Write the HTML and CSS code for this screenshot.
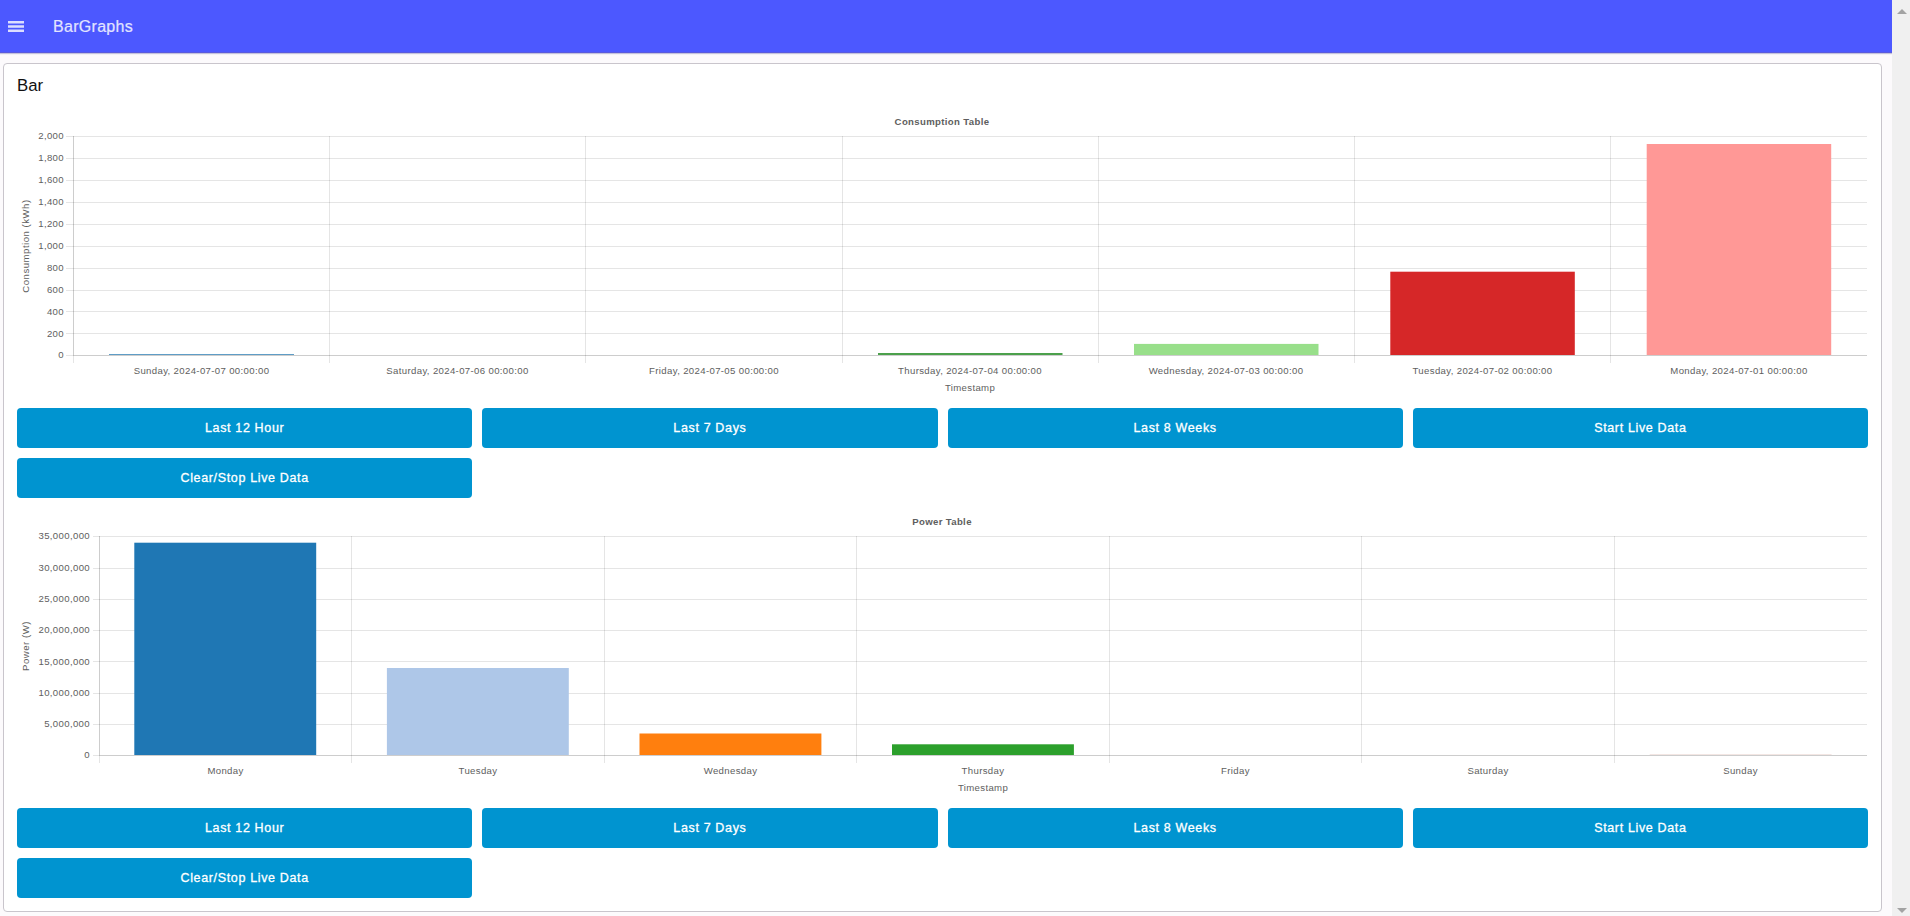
FILE: index.html
```html
<!DOCTYPE html>
<html lang="en">
<head>
<meta charset="utf-8">
<title>BarGraphs</title>
<link rel="stylesheet" href="styles.css">
</head>
<body>
<div class="page">
  <header class="toolbar">
    <svg class="menu-icon" width="16" height="11" viewBox="0 0 16 11"><path d="M0 0h16v2.4H0zM0 4.3h16v2.4H0zM0 8.6h16V11H0z"/></svg>
    <h1 class="toolbar-title">BarGraphs</h1>
  </header>
  <main class="card">
    <h2 class="card-title">Bar</h2>

    <svg class="chart" viewBox="17 108 1852 290" width="1852" height="290">
      <text class="title" x="942" y="125">Consumption Table</text>
      <path class="grid" d="M66 136.5H1867M66 158.5H1867M66 180.5H1867M66 202.5H1867M66 224.5H1867M66 246.5H1867M66 268.5H1867M66 290.5H1867M66 311.5H1867M66 333.5H1867M66 355.5H1867M73.5 136V363M329.5 136V363M585.5 136V363M842.5 136V363M1098.5 136V363M1354.5 136V363M1610.5 136V363"/>
      <path class="grid" d="M73.5 136V355M73 355.5H1867"/>
      <rect x="109" y="354" width="185" height="1" fill="#5f9dc6"/>
      <rect x="878" y="353" width="184.5" height="2" fill="#4ba04b"/>
      <rect x="1134" y="343.9" width="184.5" height="11.1" fill="#98df8a"/>
      <rect x="1390.3" y="271.7" width="184.5" height="83.3" fill="#d62728"/>
      <rect x="1646.7" y="144" width="184.5" height="211" fill="#ff9896"/>
      <g class="y-labels">
        <text x="64" y="139">2,000</text><text x="64" y="161">1,800</text><text x="64" y="183">1,600</text><text x="64" y="205">1,400</text><text x="64" y="227">1,200</text><text x="64" y="249">1,000</text><text x="64" y="271">800</text><text x="64" y="293">600</text><text x="64" y="315">400</text><text x="64" y="337">200</text><text x="64" y="358">0</text>
      </g>
      <g class="x-labels">
        <text x="201.5" y="374">Sunday, 2024-07-07 00:00:00</text><text x="457.5" y="374">Saturday, 2024-07-06 00:00:00</text><text x="714" y="374">Friday, 2024-07-05 00:00:00</text><text x="970" y="374">Thursday, 2024-07-04 00:00:00</text><text x="1226" y="374">Wednesday, 2024-07-03 00:00:00</text><text x="1482.5" y="374">Tuesday, 2024-07-02 00:00:00</text><text x="1739" y="374">Monday, 2024-07-01 00:00:00</text>
        <text x="970" y="391">Timestamp</text>
      </g>
      <text class="axis-name" transform="translate(29 246) rotate(-90)">Consumption (kWh)</text>
    </svg>
    <div class="buttons">
      <button>Last 12 Hour</button><button>Last 7 Days</button><button>Last 8 Weeks</button><button>Start Live Data</button><button>Clear/Stop Live Data</button>
    </div>

    <svg class="chart" viewBox="17 508 1852 290" width="1852" height="290">
      <text class="title" x="942" y="525">Power Table</text>
      <path class="grid" d="M93 536.5H1867M93 568.5H1867M93 599.5H1867M93 630.5H1867M93 661.5H1867M93 693.5H1867M93 724.5H1867M93 755.5H1867M99.5 536V763M351.5 536V763M604.5 536V763M856.5 536V763M1109.5 536V763M1361.5 536V763M1614.5 536V763"/>
      <path class="grid" d="M99.5 536V755M99 755.5H1867"/>
      <rect x="134.3" y="542.7" width="181.9" height="212.3" fill="#1f77b4"/>
      <rect x="386.9" y="668" width="181.9" height="87" fill="#aec7e8"/>
      <rect x="639.5" y="733.5" width="181.9" height="21.5" fill="#ff7f0e"/>
      <rect x="892" y="744.3" width="181.9" height="10.7" fill="#2ca02c"/>
      <rect x="1649.7" y="754" width="181.9" height="1" fill="#f3e6e3"/>
      <g class="y-labels">
        <text x="90" y="539">35,000,000</text><text x="90" y="571">30,000,000</text><text x="90" y="602">25,000,000</text><text x="90" y="633">20,000,000</text><text x="90" y="665">15,000,000</text><text x="90" y="696">10,000,000</text><text x="90" y="727">5,000,000</text><text x="90" y="758">0</text>
      </g>
      <g class="x-labels">
        <text x="225.5" y="774">Monday</text><text x="478" y="774">Tuesday</text><text x="730.5" y="774">Wednesday</text><text x="983" y="774">Thursday</text><text x="1235.5" y="774">Friday</text><text x="1488" y="774">Saturday</text><text x="1740.5" y="774">Sunday</text>
        <text x="983" y="791">Timestamp</text>
      </g>
      <text class="axis-name" transform="translate(29 646) rotate(-90)">Power (W)</text>
    </svg>
    <div class="buttons">
      <button>Last 12 Hour</button><button>Last 7 Days</button><button>Last 8 Weeks</button><button>Start Live Data</button><button>Clear/Stop Live Data</button>
    </div>
  </main>
</div>
<div class="scrollbar">
  <svg width="10" height="5" viewBox="0 0 10 5"><path d="M0 5L5 0L10 5z"/></svg>
  <svg width="10" height="5" viewBox="0 0 10 5"><path d="M0 0L5 5L10 0z"/></svg>
</div>
</body>
</html>
```
FILE: styles.css
```css
* { box-sizing: border-box; }
body {
  margin: 0;
  height: 916px;
  display: flex;
  overflow: hidden;
  background: #fcfafc;
  font-family: "Liberation Sans", Arial, sans-serif;
}
.page { flex: 1; min-width: 0; }
.toolbar {
  height: 53px;
  display: flex;
  align-items: center;
  padding: 1px 0 0 8px;
  background: #4c58ff;
  border-bottom: 1px solid #5a5bdc;
  box-shadow: 0 1px 1px #c4c2dc;
}
.menu-icon { fill: #dcdeff; }
.toolbar-title {
  margin: 0 0 0 29px;
  font-size: 16px;
  font-weight: 400;
  letter-spacing: 0.3px;
  color: #e2e4ff;
  -webkit-text-stroke: 0.2px #e2e4ff;
}
.card {
  margin: 10px 10px 0 3px;
  height: 849px;
  padding: 0 13px;
  background: #fff;
  border: 1px solid #c9c5cc;
  border-radius: 4px;
}
.card-title {
  margin: 0;
  height: 44px;
  padding-top: 12px;
  font-size: 16.8px;
  line-height: 20px;
  font-weight: 400;
  color: #111;
}
.chart { display: block; }
.chart text {
  font-size: 9.6px;
  letter-spacing: 0.35px;
  fill: #5e5e5e;
}
.chart .title { font-weight: 700; text-anchor: middle; }
.grid { fill: none; stroke: rgba(0, 0, 0, 0.1); }
.y-labels { text-anchor: end; }
.x-labels { text-anchor: middle; }
.chart .axis-name { text-anchor: middle; letter-spacing: 0.5px; }
.buttons {
  display: grid;
  grid-template-columns: repeat(4, 1fr);
  grid-auto-rows: 40px;
  gap: 10px;
  padding-top: 10px;
  height: 110px;
}
.buttons button {
  border: 0;
  border-radius: 4px;
  background: #0094d0;
  color: #fff;
  font-family: inherit;
  font-size: 12.5px;
  font-weight: 400;
  letter-spacing: 0.65px;
  -webkit-text-stroke: 0.3px #fff;
}
.scrollbar {
  width: 18px;
  display: flex;
  flex-direction: column;
  justify-content: space-between;
  align-items: center;
  padding: 9px 0 3px 2px;
  background: #f0f0f0;
}
.scrollbar path { fill: #a3a3a3; }
```
